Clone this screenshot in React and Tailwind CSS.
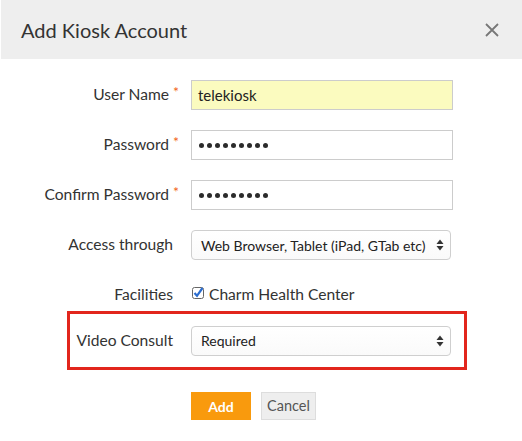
import React from "react";

const font = { fontFamily: "Lato, 'Open Sans', sans-serif" };

const Arrows = () => (
    <svg width="8" height="12" viewBox="0 0 8 12" className="shrink-0">
        <path d="M4 0.5 L7.5 5 L0.5 5 Z" fill="#333" />
        <path d="M4 11.5 L7.5 7 L0.5 7 Z" fill="#333" />
    </svg>
);

const Dots = () => (
    <div className="flex items-center gap-[3px]">
        {Array.from({ length: 9 }).map((_, i) => (
            <div key={i} className="w-[5px] h-[5px] rounded-full bg-[#2b2b2b]" />
        ))}
    </div>
);

const Label = ({ children, req }) => (
    <div className={`w-[181px] shrink-0 text-right text-[15.6px] text-[#333] ${req ? "pr-[2px]" : "pr-[8px]"}`}>
        {children}
        {req && <span className="text-[#f26522] text-[14px] relative top-[-3px] ml-[4px]">*</span>}
    </div>
);

const Select = ({ value }) => (
    <div className="w-[260px] h-[30px] border border-[#cfcfcf] rounded-[4px] bg-gradient-to-b from-white to-[#fafafa] flex items-center justify-between pl-[9px] pr-[6px] text-[14px] text-[#222]">
        <span>{value}</span>
        <Arrows />
    </div>
);

export default function App() {
    return (
        <div className="w-[522px] h-[441px] bg-white" style={font}>
            <div className="ml-px h-[59px] bg-[#eeeeee] flex items-center justify-between pl-[20px] pr-[23px]">
                <span className="text-[20px] text-[#333] mt-[1px]">Add Kiosk Account</span>
                <svg width="14" height="14" viewBox="0 0 14 14">
                    <path d="M1 1 L13 13 M13 1 L1 13" stroke="#777" strokeWidth="1.8" />
                </svg>
            </div>

            <div className="pt-[21px] flex flex-col">
                <div className="flex items-center h-[30px]">
                    <Label req>User Name</Label>
                    <div className="ml-[10px] w-[262px] h-[30px] border border-[#cccccc] bg-[#fbfbbf] flex items-center pl-[6px] text-[15px] text-[#222]">
                        telekiosk
                    </div>
                </div>

                <div className="flex items-center h-[30px] mt-[20px]">
                    <Label req>Password</Label>
                    <div className="ml-[10px] w-[262px] h-[30px] border border-[#cccccc] bg-white flex items-center pl-[7px]">
                        <Dots />
                    </div>
                </div>

                <div className="flex items-center h-[30px] mt-[20px]">
                    <Label req>Confirm Password</Label>
                    <div className="ml-[10px] w-[262px] h-[30px] border border-[#cccccc] bg-white flex items-center pl-[7px]">
                        <Dots />
                    </div>
                </div>

                <div className="flex items-center h-[30px] mt-[20px]">
                    <Label>Access through</Label>
                    <div className="ml-[10px]">
                        <Select value="Web Browser, Tablet (iPad, GTab etc)" />
                    </div>
                </div>

                <div className="flex items-center h-[30px] mt-[20px]">
                    <Label>Facilities</Label>
                    <div className="ml-[11px] flex items-center gap-[5px] text-[15.6px] text-[#333]">
                        <svg width="12" height="12" viewBox="0 0 12 12" className="mt-[-3px]">
                            <rect x="0.5" y="0.5" width="11" height="11" rx="2" fill="#fff" stroke="#666" />
                            <path d="M2.5 6 L5 8.8 L10.5 1" fill="none" stroke="#2a6ccf" strokeWidth="2.2" />
                        </svg>
                        <span>Charm Health Center</span>
                    </div>
                </div>

                <div className="ml-[67px] mt-[1px] w-[400px] h-[59px] border-[3px] border-[#e2261d] flex items-center">
                    <div className="w-[111px] shrink-0 text-right pr-[8px] text-[15.6px] text-[#333]">Video Consult</div>
                    <div className="ml-[10px]">
                        <Select value="Required" />
                    </div>
                </div>

                <div className="flex mt-[22px] pl-[191px] gap-[10px]">
                    <button className="w-[60px] h-[28px] bg-[#f99a0d] text-white text-[14px] font-bold">Add</button>
                    <button className="w-[55px] h-[28px] bg-[#eeeeee] border border-[#dddddd] text-[#555] text-[14.5px]">Cancel</button>
                </div>
            </div>
        </div>
    );
}
